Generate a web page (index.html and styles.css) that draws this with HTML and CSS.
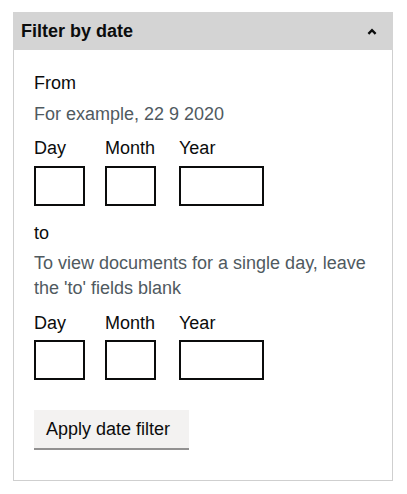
FILE: index.html
```html
<!DOCTYPE html>
<html lang="en">
<head>
<meta charset="utf-8">
<title>Filter by date</title>
<link rel="stylesheet" href="styles.css">
</head>
<body>
<div class="panel">
  <div class="panel-header">
    <span class="panel-title">Filter by date</span>
    <svg class="chevron" width="10" height="7" viewBox="0 0 10 7" aria-hidden="true"><path d="M1.4 5.8 L5 2.2 L8.6 5.8" fill="none" stroke="#0b0c0c" stroke-width="2.4"/></svg>
  </div>
  <div class="panel-body">
    <div class="group">
      <div class="legend">From</div>
      <div class="hint hint-from">For example, 22 9 2020</div>
      <div class="date-row">
        <div class="date-item item-day"><label class="date-label">Day</label><input class="date-input w-day" type="text"></div>
        <div class="date-item item-month"><label class="date-label">Month</label><input class="date-input w-day" type="text"></div>
        <div class="date-item item-year"><label class="date-label">Year</label><input class="date-input w-year" type="text"></div>
      </div>
    </div>
    <div class="group group-to">
      <div class="legend">to</div>
      <div class="hint hint-to">To view documents for a single day, leave the 'to' fields blank</div>
      <div class="date-row">
        <div class="date-item item-day"><label class="date-label">Day</label><input class="date-input w-day" type="text"></div>
        <div class="date-item item-month"><label class="date-label">Month</label><input class="date-input w-day" type="text"></div>
        <div class="date-item item-year"><label class="date-label">Year</label><input class="date-input w-year" type="text"></div>
      </div>
    </div>
    <button class="button" type="button">Apply date filter</button>
  </div>
</div>
</body>
</html>
```
FILE: styles.css
```css
* { box-sizing: border-box; }
body {
  margin: 0;
  font-family: "Liberation Sans", Arial, sans-serif;
  font-size: 18px;
  line-height: 25px;
  color: #0b0c0c;
  background: #ffffff;
}
.panel {
  margin: 12px 0 0 13px;
  width: 380px;
}
.panel-header {
  height: 38px;
  background: #d4d4d4;
  display: flex;
  align-items: center;
  justify-content: space-between;
  padding: 0 16px 0 8px;
}
.panel-title {
  font-weight: bold;
  font-size: 18px;
}
.chevron { display: block; margin-top: 0; }
.panel-body {
  border: 1px solid #cfcfcf;
  border-top: none;
  padding: 21px 20px 32px 20px;
}
.legend { line-height: 25px; }
.hint {
  color: #505a5f;
  margin-top: 6px;
}
.hint-to { margin-top: 5px; }
.date-row {
  display: flex;
  margin-top: 9px;
}
.group-to .date-row { margin-top: 10px; }
.date-item {
  display: flex;
  flex-direction: column;
  margin-right: 20px;
}
.item-day { width: 51px; }
.item-month { width: 54px; }
.item-year { width: 85px; margin-right: 0; }
.date-label {
  display: block;
  line-height: 25px;
  margin-bottom: 5px;
}
.group-to .date-label { margin-bottom: 4px; }
.date-input {
  height: 40px;
  border: 2px solid #0b0c0c;
  border-radius: 0;
  padding: 5px;
  font: inherit;
  background: #ffffff;
  margin: 0;
}
.w-day { width: 51px; }
.w-year { width: 85px; }
.group-to { margin-top: 15px; }
.button {
  margin-top: 30px;
  display: block;
  height: 38px;
  width: 155px;
  padding: 0 12px;
  border: 0;
  border-radius: 0;
  background: #f3f2f1;
  box-shadow: 0 2px 0 #929191;
  font: inherit;
  color: #0b0c0c;
  text-align: left;
}
```
